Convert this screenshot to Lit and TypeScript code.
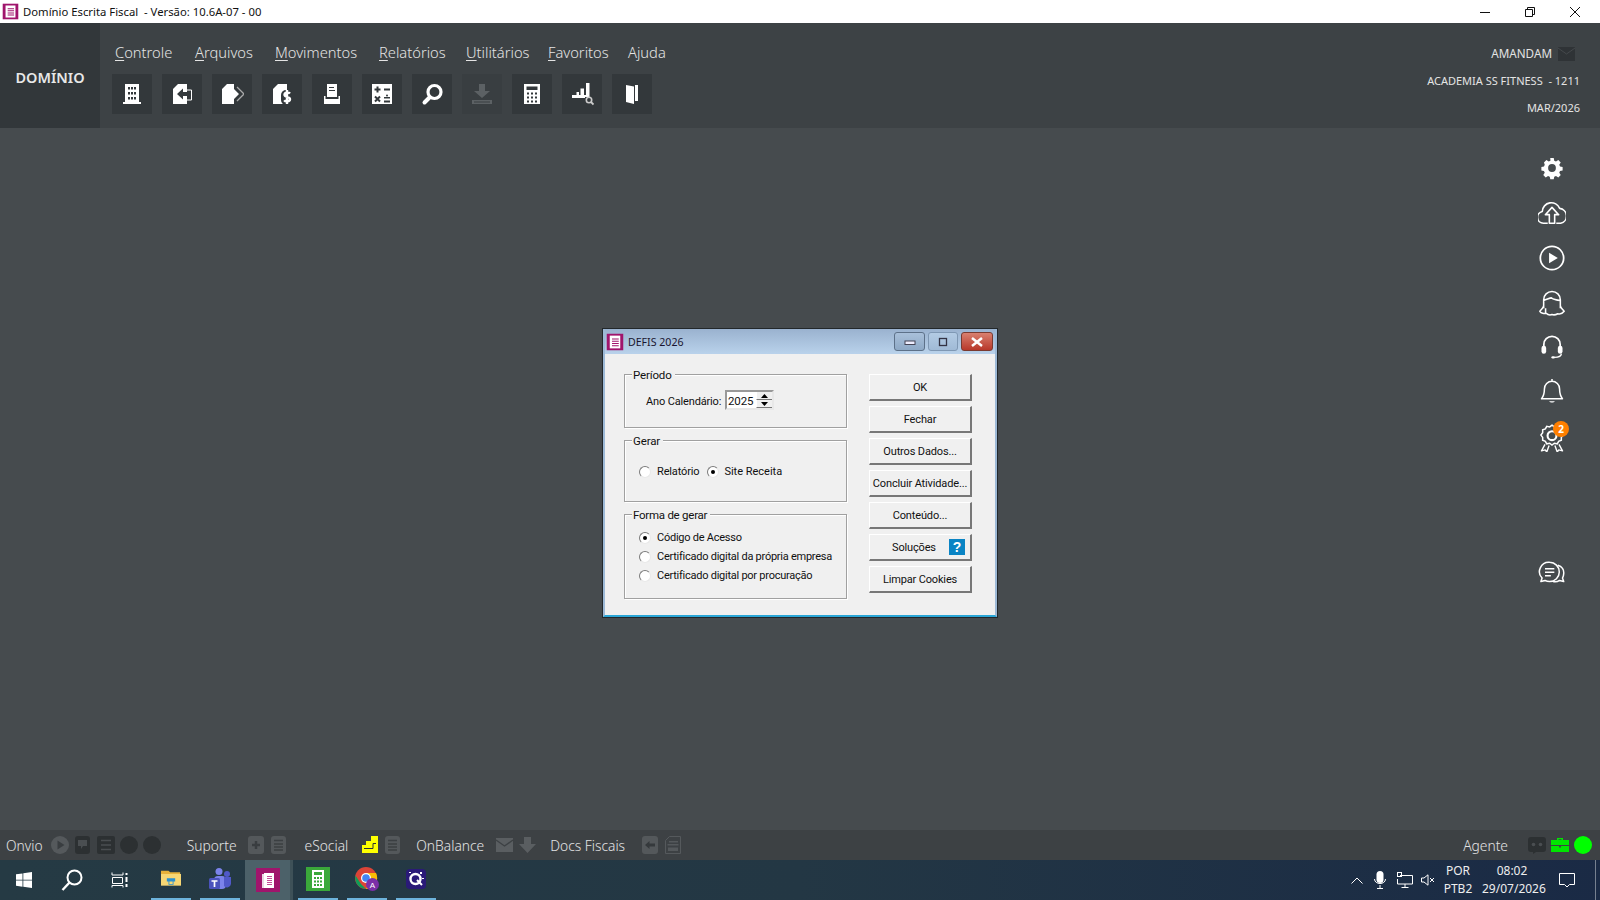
import { LitElement, html, css, svg } from "lit";
import { customElement } from "lit/decorators.js";

const D = "#33383b";
const ic = (w: number, h: number, body: unknown, vb = "0 0 24 24") =>
  html`<svg width=${w} height=${h} viewBox=${vb} style="display:block;flex:none">${body}</svg>`;

const tools = [
  svg`<path fill="#fff" fill-rule="evenodd" d="M5 2h14v18h2v2H3v-2h2zM8 5v2.500h2V5zm3 0v2.500h2V5zm3 0v2.500h2V5zM8 10v2.500h2V10zm3 0v2.500h2V10zm3 0v2.500h2V10zM8 15v2.500h2V15zm3 0v2.500h2V15zm3 0v2.500h2V15z"/>`,
  svg`<path fill="#fff" d="M8 2h9v20H3V7z"/><path fill="${D}" d="M7 12l6-5.500V10h8v4h-8v3.500z"/><path fill="none" stroke="#fff" d="M17 8h4.500v10H17"/>`,
  svg`<path fill="#fff" d="M7 2h7v5l5 5-5 5v5H2V7z"/><path fill="none" stroke="#aaa" stroke-width="1.300" d="M17 5l7 7-7 7"/>`,
  svg`<path fill="#fff" d="M8 2h9v20H3V7z"/><rect x="11" y="8" width="11" height="15" rx="5" fill="${D}"/><path fill="none" stroke="#fff" stroke-width="2.400" d="M20 11.500c-1-1.200-5.500-1.300-5.500 1.200 0 2.800 5.500 1.700 5.500 4.500 0 2.600-4.800 2.400-5.800 1M17 8v14"/>`,
  svg`<path fill="#fff" fill-rule="evenodd" d="M7 2h10v13H7zM9 5v1h5V5zm0 3v1h6V8z"/><path fill="#fff" d="M4 14h1.500v3h13v-3H20v8H4z"/>`,
  svg`<path fill="#fff" d="M2 2h20v20H2z"/><path fill="none" stroke="${D}" stroke-width="2" d="M4.500 7.500h6M7.500 4.500v6M14 7.500h6M5 14.500l5 5M10 14.500l-5 5M14 19.500h6"/><path fill="${D}" d="M14 15h6v1.500h-6z"/><circle cx="17" cy="13.500" r="1" fill="${D}"/>`,
  svg`<circle cx="14.500" cy="10" r="6.500" fill="none" stroke="#fff" stroke-width="3.200"/><path stroke="#fff" stroke-width="4" stroke-linecap="round" d="M9.500 15.500L4.500 20.500"/>`,
  svg`<path fill="#5c6164" d="M9 2h6v7h5l-8 7-8-7h5zM2 18h20v4H2z"/><path fill="#393e41" d="M4 19.500h16v1H4z"/>`,
  svg`<path fill="#fff" fill-rule="evenodd" d="M4 2h16v20H4zM6.500 4.500v3.500h11V4.500zM7 10.500v2h2v-2zm4 0v2h2v-2zm4 0v2h2v-2zM7 14.500v2h2v-2zm4 0v2h2v-2zm4 0v2h2v-2zM7 18.500v2h2v-2zm4 0v2h2v-2zm4 0v2h2v-2z"/>`,
  svg`<path fill="#fff" d="M2 13h4.500v-3h2.500v3h1.500V6.500H14V13h2V1h3.500v14H15v1H2z"/><circle cx="19" cy="18" r="2.700" fill="none" stroke="#ccc" stroke-width="1.600"/><path stroke="#ccc" stroke-width="1.800" d="M21 20l2.500 2.500"/>`,
  svg`<path fill="#fff" d="M6 3l8 1.500V22l-8-2z"/><path fill="#fff" d="M15 3h3v16h-3z"/>`,
];

const rail = [
  svg`<g transform="translate(12 12) scale(.74) translate(-12 -12)"><path fill="#fff" fill-rule="evenodd" d="M10 .5h4l.6 3 2 .9 2.700-1.700 2.800 2.800-1.700 2.700.9 2 3 .6v4l-3 .6-.9 2 1.700 2.700-2.800 2.800-2.700-1.700-2 .9-.6 3h-4l-.6-3-2-.9-2.700 1.700-2.800-2.800 1.700-2.700-.9-2-3-.6v-4l3-.6.9-2L2.700 5.500l2.800-2.800 2.700 1.700 2-.9zM12 7.500a4.500 4.500 0 1 0 0 9 4.500 4.500 0 0 0 0-9z"/></g>`,
  svg`<g transform="translate(12 14) scale(1.14) translate(-12 -14)"><path fill="none" stroke="#fff" stroke-width="1.200" stroke-linejoin="round" d="M8.800 20H5.500a4.500 4.500 0 0 1-.8-8.900A6.800 6.800 0 0 1 17.800 8.800a5.700 5.700 0 0 1 .7 11.200h-3.300M10 20v-6.500H7l5-5.500 5 5.500h-3V20z"/></g>`,
  svg`<circle cx="12" cy="12" r="10" fill="none" stroke="#fff" stroke-width="1.500"/><path fill="#fff" d="M9.500 7.500l7.500 4.500-7.500 4.500z"/>`,
  svg`<g transform="translate(12 12) scale(1.1) translate(-12 -12)"><path fill="none" stroke="#fff" stroke-width="1.200" stroke-linejoin="round" d="M5.500 16V9.500a6.500 6.500 0 0 1 13 0V16M5.500 10c3-1 5-2 6-2 2 1.500 4 1.800 7 2M5.500 14c0 2-2 3-3 4.500 1 1.600 3.500 2 5 1.500 1 1 3 1.500 4.500 1 1.500.5 3 .2 4.500-.6 1.500 .5 3.500 0 5-1.900-1-1.500-3-2.500-3-4.500M7 19.500V16"/></g>`,
  svg`<g transform="translate(0 -2)"><path fill="none" stroke="#fff" stroke-width="1.500" d="M5 14V11a7 7 0 0 1 14 0v3"/><rect x="3" y="12" width="4" height="7" rx="2" fill="#fff"/><rect x="17" y="12" width="4" height="7" rx="2" fill="#fff"/><path fill="none" stroke="#fff" stroke-width="1.200" d="M20 19c0 2.500-3 3-6 3"/><rect x="11.500" y="21" width="3" height="2" rx="1" fill="#fff"/></g>`,
  svg`<g transform="translate(0 -2)"><path fill="none" stroke="#fff" stroke-width="1.300" stroke-linejoin="round" d="M12 1.500v2.500M12 4a6.500 6.500 0 0 0-6.500 6.500c0 5-1 6.500-2.500 8.500h18c-1.500-2-2.500-3.500-2.500-8.500A6.500 6.500 0 0 0 12 4z"/><path fill="#fff" d="M9.500 21h5c-1 1.500-4 1.500-5 0z"/></g>`,
  svg`<path fill="none" stroke="#fff" stroke-width="1.300" d="M12 1l2 1.500 2.500-.5 1.200 2.200 2.300.8v2.500l1.500 2-1.500 2v2.500l-2.300.8-1.200 2.200-2.500-.5-2 1.500-2-1.500-2.500.5-1.200-2.200-2.300-.8v-2.500l-1.500-2 1.500-2V5l2.300-.8 1.200-2.200 2.500.5z"/><circle cx="12" cy="10" r="3.800" fill="none" stroke="#fff" stroke-width="1.800"/><path fill="none" stroke="#fff" stroke-width="1.200" stroke-linejoin="round" d="M6 17.500l-3 5.500 3.200-.8 1.300 1.800 2-5.500M18 17.500l3 5.500-3.200-.8-1.300 1.800-2-5.500"/>`,
  svg`<g transform="translate(0 -1)"><path fill="none" stroke="#fff" stroke-width="1.300" stroke-linejoin="round" d="M10 3a8 8 0 0 1 0 16.500c-1.500 0-3-.4-4-1l-3.500 1 1-3A8 8 0 0 1 10 3zM17 5.500c3.500 1 5.500 4 5 7.500 0 1.500-.5 2.500-1 3.500l1 3-3.500-1c-1.500 1-3.500 1.500-5.500 1"/><path stroke="#fff" stroke-width="1.300" d="M6 8.500h8M6 11.500h8M6 14.500h5"/></g>`,
];

const minis = {
  play: svg`<circle cx="9" cy="9" r="9" fill="#55595c"/><path fill="#393d40" d="M6.500 4.500l7 4.500-7 4.500z"/>`,
  chat: svg`<rect x="1" width="15" height="18" rx="3" fill="#2c3032"/><path fill="#4a4e51" d="M4 4h9v6h-4l-2 3v-3H4z"/>`,
  list: svg`<rect x="0" width="18" height="18" rx="2" fill="#2c3032"/><path stroke="#4a4e51" stroke-width="1.500" d="M4 4.500h10M4 9h10M4 13.500h10"/>`,
  dot: svg`<circle cx="9" cy="9" r="9" fill="#2c3032"/>`,
  plus: svg`<rect x="1" width="16" height="18" rx="3" fill="#54585b"/><path stroke="#393d40" stroke-width="2.500" d="M5 9h8M9 5v8"/>`,
  list2: svg`<rect x="1" width="15" height="18" rx="3" fill="#54585b"/><path stroke="#3b3f42" stroke-width="1.300" d="M4 4.500h9M4 8h9M4 11h9M4 14h9"/>`,
  es: svg`<path fill="#ffff00" d="M1 9h4V5h5V0h7v17H1z"/><path fill="none" stroke="#2d3134" d="M3 12.500h9V7.500h3"/>`,
  mail: svg`<rect y="2" width="17" height="14" fill="#5a5e61"/><path fill="none" stroke="#3d4144" stroke-width="1.400" d="M0 4l8.500 6L17 4"/>`,
  down: svg`<path fill="#5a5e61" d="M5 1h7v7h5l-8.500 9L0 8h5z"/>`,
  back: svg`<rect width="16" height="18" rx="3" fill="#54585b"/><path fill="#35393c" d="M3 9l4.500-4v2.500H13v3H7.500V13z"/>`,
  nfe: svg`<path fill="none" stroke="#55595c" d="M4.500.5h11v17H.500V4.500z"/><path fill="#55595c" d="M4 5h9v1.500H4zM2.500 8h11v1.500h-11zM3 11.500h10V15H3z"/>`,
  bot: svg`<path fill="#2c3032" d="M3 1h12a3 3 0 0 1 3 3v9a3 3 0 0 1-3 3H8l-3 2v-2H3a3 3 0 0 1-3-3V4a3 3 0 0 1 3-3z"/><circle cx="5.500" cy="8.500" r="1.800" fill="#4a4e51"/><circle cx="12.500" cy="8.500" r="1.800" fill="#4a4e51"/>`,
  case: svg`<path fill="#00e600" d="M6 2h6v2h6v5H0V4h6zM7.500 3.200V4h3v-.8zM0 10h8v1.500h2V10h8v6H0z"/>`,
  on: svg`<circle cx="9" cy="9" r="9" fill="#00ff00"/>`,
};

@customElement("app-root")
export class AppRoot extends LitElement {
  static styles = css`
    :host { display: block; width: 1600px; height: 900px; overflow: hidden; font-family: "Noto Sans", "Open Sans", sans-serif; color: #fff; }
    .page { height: 900px; display: flex; flex-direction: column; background: #464b4e; }
    .title { height: 23px; flex: none; background: #fff; color: #111; display: flex; align-items: center; font-size: 11.300px; padding-left: 2px; white-space: pre; }
    .title .logo { margin-right: 4px; }
    .wc { margin-left: auto; padding-right: 3px; display: flex; align-items: center; }
    .wc span { width: 45px; height: 23px; display: flex; align-items: center; justify-content: center; }
    .head { height: 105px; flex: none; display: flex; background: #3d4245; box-sizing: border-box; }
    .brand { width: 100px; background: #32373a; display: flex; align-items: center; justify-content: center; font-weight: 600; font-size: 14.500px; color: #e8e8e8; padding-top: 2px; box-sizing: border-box; }
    .headmain { padding: 18px 0 0 12px; display: flex; flex-direction: column; gap: 11px; }
    .menu { display: flex; padding-left: 3px; font-size: 14.700px; line-height: 22px; color: #e4e4e4; font-weight: 300; }
    .menu u { text-underline-offset: 2px; }
    .tools { display: flex; gap: 10px; }
    .tool { width: 40px; height: 40px; background: #33383b; display: flex; align-items: center; justify-content: center; }
    .tool.off { background: #393e41; }
    .info { margin-left: auto; padding: 17px 20px 0 0; display: flex; flex-direction: column; align-items: flex-end; font-size: 11px; line-height: 27px; color: #e4e4e4; white-space: pre; }
    .info .user { display: flex; align-items: center; gap: 6px; margin-right: 5px; font-size: 11.700px; }
    .main { flex: 1; position: relative; display: flex; justify-content: flex-end; }
    .rail { width: 96px; padding: 25px 0 0 0; box-sizing: border-box; display: flex; flex-direction: column; align-items: center; gap: 15px; }
    .rail .ri { height: 30px; display: flex; align-items: center; justify-content: center; position: relative; }
    .rail .ri.far { margin-top: 91px; }
    .badge { position: absolute; top: -2px; left: 15px; width: 16px; height: 16px; border-radius: 50%; background: #ff7f00; font-size: 10px; font-weight: 700; line-height: 16px; text-align: center; color: #fff; }
    .status { height: 30px; flex: none; background: #3d4144; display: flex; align-items: center; font-size: 13.800px; color: #e4e4e4; padding-left: 6px; font-weight: 300; }
    .seg { display: flex; align-items: center; }
    .seg .ics { display: flex; gap: 5px; }
    .status .grow { flex: 1; }
    .task { height: 40px; flex: none; background: linear-gradient(90deg, #253a44, #233744 50%, #1a2a45); display: flex; align-items: center; position: relative; }
    .task .btn { width: 40px; height: 40px; box-sizing: border-box; display: flex; align-items: center; justify-content: center; border-bottom: 2px solid #6db3dc; }
    .task .apps { display: flex; gap: 9px; margin-left: 22px; }
    .task .plain { display: flex; align-items: center; justify-content: center; }
    .task .act { width: 45px; height: 40px; margin-left: -4px; display: flex; align-items: center; justify-content: center; background: #4c6169; box-sizing: border-box; }
    .task .strip { width: 3px; height: 40px; background: #3e5158; margin: 0 -4px 0 -9px; }
    .tray { margin-left: auto; display: flex; align-items: center; height: 40px; font-size: 12px; color: #eee; border-right: 1px solid #76808f; margin-right: 4px; }
    .tray .lang { width: 30px; margin-left: 8px; text-align: center; line-height: 18px; font-size: 12px; }
    .tray .clock { width: 60px; margin-left: 9px; text-align: center; line-height: 18px; font-size: 12px; }
    .tray .s0 { width: 11px; } .tray .s1 { width: 11px; } .tray .s2 { width: 8px; } .tray .s3 { width: 17px; } .tray .s4 { width: 20px; }

    .dlg { position: absolute; left: 603px; top: 201px; width: 394px; height: 288px; box-sizing: border-box; background: #f0f0f0; border: 2px solid #9db9d6; border-bottom: 2px solid #2aa6d6; border-top: 0; outline: 1px solid #23282b; font-family: Roboto, "Liberation Sans", sans-serif; font-size: 11px; letter-spacing: -0.15px; color: #111; display: flex; flex-direction: column; }
    .dt { height: 25px; flex: none; background: linear-gradient(#9ab2cf, #b9d2eb); display: flex; align-items: center; padding: 0 2px 0 1px; font-family: "Noto Sans", sans-serif; letter-spacing: 0; font-size: 10.600px; color: #1a1530; }
    .dt .txt { margin-left: 4px; flex: 1; }
    .dwc { display: flex; gap: 3px; margin-left: -2px; }
    .dwc span { height: 19px; width: 31px; box-sizing: border-box; border: 1px solid #5d7189; border-radius: 3px; display: flex; align-items: center; justify-content: center; background: linear-gradient(#a9c0da, #8ea9c6); }
    .dwc span.mx { width: 30px; background: linear-gradient(#b3cbe4, #a0bad6); border-color: #7f98b4; }
    .dwc span.x { width: 32px; background: linear-gradient(#d9806f, #b8382a); border-color: #7a3a30; }
    .dbody { flex: 1; display: flex; gap: 22px; padding: 20px 0 0 19px; }
    .groups { width: 223px; display: flex; flex-direction: column; gap: 12px; }
    .grp { position: relative; box-sizing: border-box; border: 1px solid #a0a0a0; box-shadow: 1px 1px 0 #fff, inset 1px 1px 0 #fff; display: flex; }
    .grp .lg { position: absolute; top: -6px; left: 7px; background: #f0f0f0; padding: 0 3px 0 1px; line-height: 12px; font-size: 11.500px; }
    .g1 { height: 54px; padding: 15px 0 0 21px; align-items: flex-start; }
    .g1 .lbl { line-height: 24px; width: 79px; }
    .g2 { height: 62px; align-items: center; padding-left: 14px; padding-top: 1px; }
    .g3 { height: 85px; flex-direction: column; padding: 13px 0 0 14px; letter-spacing: -0.25px; }
    .spin { width: 49px; height: 20px; box-sizing: border-box; background: #fff; border: 2px solid #999; border-right-color: #e8e8e8; border-bottom-color: #e8e8e8; display: flex; align-items: center; padding-left: 1px; font-size: 11.500px; justify-content: space-between; }
    .spin .v { padding-top: 1px; }
    .spinb { display: flex; flex-direction: column; width: 16px; height: 16px; }
    .spinb i { flex: 1; background: #f0f0f0; border-bottom: 1px solid #777; border-left: 1px solid #fff; display: flex; align-items: center; justify-content: center; }
    .rad { display: flex; align-items: center; height: 19px; gap: 6px; }
    .g2 .rad + .rad { margin-left: 8px; gap: 5px; letter-spacing: 0; }
    .rb { width: 12px; height: 12px; flex: none; box-sizing: border-box; border-radius: 50%; background: #fff; border: 1.500px solid; border-color: #7b7b7b #e8e8e8 #e8e8e8 #7b7b7b; display: flex; align-items: center; justify-content: center; }
    .rb.on::after { content: ""; width: 4px; height: 4px; border-radius: 50%; background: #000; }
    .btns { width: 103px; display: flex; flex-direction: column; gap: 5px; }
    .b { height: 27px; box-sizing: border-box; background: #f0f0f0; border: 1px solid; border-color: #fff #777 #777 #fff; border-width: 1px 2px 2px 1px; display: flex; align-items: center; justify-content: center; white-space: nowrap; }
    .b.sol { justify-content: flex-start; padding-left: 22px; gap: 13px; }
    .q { width: 16px; height: 16px; background: #0a84c4; color: #fff; font-weight: 700; font-size: 14px; line-height: 16px; text-align: center; font-family: "Liberation Sans", sans-serif; }
  `;

  private seg(label: string, names: (keyof typeof minis)[], ml: number, gap: number) {
    return html`<div class="seg" style="margin-left:${ml}px"><span>${label}</span>
      <span class="ics" style="margin-left:${gap}px">${names.map((n) => ic(18, 18, minis[n], "0 0 18 18"))}</span></div>`;
  }

  render() {
    const menu = [["C", "ontrole", 80], ["A", "rquivos", 80], ["M", "ovimentos", 104], ["R", "elatórios", 87], ["U", "tilitários", 82], ["F", "avoritos", 80], ["", "Ajuda", 50]] as const;
    const logo = svg`<rect x="1" y="1" width="22" height="22" fill="#a0146c"/><path fill="#fff" d="M5 3.500h14v17H5z"/><path stroke="#a0146c" stroke-width="1.500" d="M8 8h9M8 11h9M8 14h9M8 17h9"/>`;
    return html`<div class="page">
      <div class="title">
        <span class="logo">${ic(17, 17, logo)}</span><span>Domínio Escrita Fiscal  - Versão: 10.6A-07 - 00</span>
        <div class="wc">
          <span>${ic(12, 12, svg`<path stroke="#111" d="M1 6.500h10"/>`, "0 0 12 12")}</span>
          <span>${ic(12, 12, svg`<path fill="none" stroke="#111" d="M1.500 3.500h7v7h-7zM3.500 3.500v-2h7v7h-2"/>`, "0 0 12 12")}</span>
          <span>${ic(12, 12, svg`<path stroke="#111" d="M1 1l10 10M11 1L1 11"/>`, "0 0 12 12")}</span>
        </div>
      </div>
      <div class="head">
        <div class="brand">DOMÍNIO</div>
        <div class="headmain">
          <div class="menu">${menu.map(([a, b, w]) => html`<span style="width:${w}px"><u>${a}</u>${b}</span>`)}</div>
          <div class="tools">${tools.map((t, i) => html`<div class="tool ${i === 7 ? "off" : ""}">${ic(24, 24, t)}</div>`)}</div>
        </div>
        <div class="info">
          <div class="user"><span>AMANDAM</span>${ic(17, 14, svg`<rect width="17" height="14" fill="#2f3336"/><path fill="none" stroke="#45494c" d="M0 1l8.500 6L17 1"/>`, "0 0 17 14")}</div>
          <div>ACADEMIA SS FITNESS  - 1211</div>
          <div>MAR/2026</div>
        </div>
      </div>
      <div class="main">
        <div class="rail">
          ${rail.map((r, i) => html`<div class="ri ${i === 7 ? "far" : ""}">${ic(28, 28, r)}${i === 6 ? html`<span class="badge">2</span>` : ""}</div>`)}
        </div>
        <div class="dlg">
          <div class="dt">
            ${ic(18, 18, logo)}<span class="txt">DEFIS 2026</span>
            <div class="dwc">
              <span>${ic(14, 8, svg`<rect x="2" y="3" width="10" height="3.500" fill="#eef" stroke="#445"/>`, "0 0 14 8")}</span>
              <span class="mx">${ic(12, 10, svg`<rect x="2.500" y="1.500" width="7" height="7" fill="none" stroke="#334" stroke-width="1.300"/>`, "0 0 12 10")}</span>
              <span class="x">${ic(12, 10, svg`<path stroke="#fff" stroke-width="2.500" d="M1 1l10 8M11 1L1 9"/>`, "0 0 12 10")}</span>
            </div>
          </div>
          <div class="dbody">
            <div class="groups">
              <div class="grp g1"><span class="lg">Período</span><span class="lbl">Ano Calendário:</span>
                <div class="spin"><span class="v">2025</span>
                  <span class="spinb"><i>${ic(7, 4, svg`<path d="M3.500 0L7 4H0z"/>`, "0 0 7 4")}</i><i>${ic(7, 4, svg`<path d="M0 0h7L3.500 4z"/>`, "0 0 7 4")}</i></span>
                </div>
              </div>
              <div class="grp g2"><span class="lg">Gerar</span>
                <label class="rad"><span class="rb"></span>Relatório</label>
                <label class="rad"><span class="rb on"></span>Site Receita</label>
              </div>
              <div class="grp g3"><span class="lg">Forma de gerar</span>
                <label class="rad"><span class="rb on"></span>Código de Acesso</label>
                <label class="rad"><span class="rb"></span>Certificado digital da própria empresa</label>
                <label class="rad"><span class="rb"></span>Certificado digital por procuração</label>
              </div>
            </div>
            <div class="btns">
              <div class="b">OK</div><div class="b">Fechar</div><div class="b">Outros Dados...</div>
              <div class="b">Concluir Atividade...</div><div class="b">Conteúdo...</div>
              <div class="b sol"><span>Soluções</span><span class="q">?</span></div>
              <div class="b">Limpar Cookies</div>
            </div>
          </div>
        </div>
      </div>
      <div class="status">
        ${this.seg("Onvio", ["play", "chat", "list", "dot", "dot"], 0, 8)}
        ${this.seg("Suporte", ["plus", "list2"], 26, 10)}
        ${this.seg("eSocial", ["es", "list2"], 17, 13)}
        ${this.seg("OnBalance", ["mail", "down"], 14, 12)}
        ${this.seg("Docs Fiscais", ["back", "nfe"], 13, 17)}
        <span class="grow"></span>
        ${this.seg("Agente", ["bot", "case", "on"], 0, 20)}
        <span style="width:8px"></span>
      </div>
      <div class="task">
        <span class="plain" style="width:16px;margin-left:16px">${ic(16, 16, svg`<path fill="#fff" d="M0 2.300l6.500-.9V7.700H0zM7.300 1.300L16 0v7.700H7.300zM0 8.400h6.500v6.300L0 13.800zM7.300 8.400H16V16l-8.700-1.200z"/>`, "0 0 16 16")}</span>
        <span class="plain" style="width:24px;margin-left:28px">${ic(24, 24, svg`<circle cx="14.500" cy="9.500" r="7" fill="none" stroke="#fff" stroke-width="2"/><path stroke="#fff" stroke-width="2.400" d="M9.500 14.500L2.500 22"/>`)}</span>
        <span class="plain" style="width:18px;margin-left:27px">${ic(18, 16, svg`<path fill="none" stroke="#fff" d="M1 .5v2.500h11V.5M1.500 5.500h10v6h-10zM1 15.500v-2h11v2"/><path fill="#fff" d="M14.500 1h2v2h-2zM14.500 5h2v5h-2zM14.500 12h2v3h-2z"/>`, "0 0 18 16")}</span>
        <div class="apps">
          <div class="btn">${ic(24, 20, svg`<path fill="#e8b23a" d="M0 2h9l2 2h12v4H0z"/><path fill="#f7d774" d="M0 6h24v14H0z"/><path fill="#2a90d0" d="M7 11h10v4H7zM9 15h6v4H9z"/><path fill="#f7d774" d="M10 15h4v3h-4z"/>`)}</div>
          <div class="btn">${ic(24, 24, svg`<circle cx="11" cy="4.500" r="3.500" fill="#7b83eb"/><circle cx="19" cy="7" r="3" fill="#5059c9"/><rect x="6" y="9" width="12" height="13" rx="4" fill="#7b83eb"/><path fill="#5059c9" d="M16 10h7v7a4 4 0 0 1-7 2z"/><rect x="1" y="11" width="11" height="11" rx="1.500" fill="#4b53bc"/><path stroke="#fff" stroke-width="1.700" d="M3.500 14h6M6.500 14v6"/>`)}</div>
          <div class="act">${ic(24, 24, svg`<path fill="#a0146c" d="M0 0h24v24H0z"/><path fill="#e8d8e4" d="M6 6h8v14H6z"/><path fill="#fff" d="M8 5h10v15H8z"/><path stroke="#c44c98" d="M11 8.500h5M11 10.500h5M11 12.500h5M11 14.500h5M11 16.500h5"/>`)}</div>
          <div class="strip"></div>
          <div class="btn">${ic(24, 24, svg`<path fill="#3aa83a" d="M0 0h24v24H0z"/><path fill="#fff" d="M6 3h12v18H6z"/><path fill="#3aa83a" d="M8 5h8v3H8zM8 10h2v2H8zM11 10h2v2h-2zM14 10h2v2h-2zM8 13.500h2v2H8zM11 13.500h2v2h-2zM14 13.500h2v2h-2zM8 17h2v2H8zM11 17h2v2h-2zM14 17h2v2h-2z"/>`)}</div>
          <div class="btn">${ic(26, 26, svg`<circle cx="12" cy="12" r="11" fill="#db4437"/><path fill="#0f9d58" d="M1.500 9.500L7 18l5 5A11 11 0 0 1 1.500 9.500z"/><path fill="#fbbc05" d="M12 7h10a11 11 0 0 1-10 16l5-9z"/><circle cx="12" cy="12" r="5" fill="#fff"/><circle cx="12" cy="12" r="3.800" fill="#4285f4"/><circle cx="18.500" cy="18.500" r="6.500" fill="#7b2fa8"/><text x="18.500" y="21.500" text-anchor="middle" font-size="8" fill="#fff" font-family="Liberation Sans">A</text>`, "0 0 26 26")}</div>
          <div class="btn">${ic(20, 20, svg`<rect width="20" height="20" rx="4" fill="#2a1a78"/><circle cx="9.500" cy="10" r="5" fill="none" stroke="#fff" stroke-width="2.400"/><path stroke="#fff" stroke-width="2" d="M11 11l5 5M15 3v2M4 3v1M17 9v1"/>`, "0 0 20 20")}</div>
        </div>
        <div class="tray">
          ${ic(12, 7, svg`<path fill="none" stroke="#fff" d="M.5 6.500l5.500-5.500 5.500 5.500"/>`, "0 0 12 7")}
          <span class="s0"></span>
          ${ic(12, 18, svg`<rect x="2.500" y="0" width="7" height="12" rx="3.500" fill="#fff"/><path fill="none" stroke="#fff" d="M.5 8c0 6 11 6 11 0M6 14v3M3 17.500h6"/>`, "0 0 12 18")}
          <span class="s1"></span>
          ${ic(16, 16, svg`<path fill="none" stroke="#fff" d="M3 3.500h12.500v8.500H.5V7M8 12v3M4.500 15.500h7"/><rect x=".5" y=".5" width="4" height="4" fill="none" stroke="#fff"/>`, "0 0 16 16")}
          <span class="s2"></span>
          ${ic(14, 12, svg`<path fill="none" stroke="#fff" d="M.5 4h2.500L7 .8v10.400L3 8H.5zM9 4l4 4M13 4l-4 4"/>`, "0 0 14 12")}
          <div class="lang"><div>POR</div><div>PTB2</div></div>
          <div class="clock"><div>08:02</div><div>29/07/2026</div></div>
          <span class="s3"></span>
          ${ic(16, 16, svg`<path fill="none" stroke="#fff" d="M.5 1.500h15v11h-5L8 15l-2.500-2.500h-5z"/>`, "0 0 16 16")}
          <span class="s4"></span>
        </div>
      </div>
    </div>`;
  }
}
